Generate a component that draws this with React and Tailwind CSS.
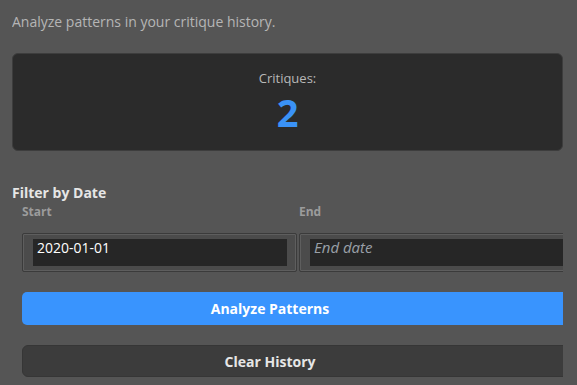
import React, { useState } from 'react';

function DateField({ label, value, placeholder }) {
  const [text, setText] = useState(value || '');
  return (
    <div className="flex flex-col">
      <span className="h-[20px] text-[12px] font-bold leading-[20px] text-[#9c9c9c]">{label}</span>
      <div className="mt-[11px] h-[39px] rounded-[2px] border border-[#3b3b3b] bg-[#4b4b4b] pl-[10px] pr-[9px] pt-[5px] shadow-[inset_0_0_0_1px_#5e5e5e]">
        <div className="h-[27px] bg-[#262626] px-[4px]">
          <input
            value={text}
            onChange={(e) => setText(e.target.value)}
            placeholder={placeholder}
            className="block h-[17px] w-full bg-transparent p-0 text-[14px] leading-[17px] text-white outline-none placeholder:text-[15px] placeholder:italic placeholder:text-[#9aa0a8]"
          />
        </div>
      </div>
    </div>
  );
}

export default function App() {
  return (
    <div className="min-h-[385px] w-[577px] overflow-hidden bg-[#555555] pl-[12px] font-['Open_Sans',sans-serif]">
      <div className="w-[551px] overflow-hidden">
        <p className="pt-[12px] text-[14px] leading-[20px] text-[#b5b5b5]">Analyze patterns in your critique history.</p>

        <div className="mt-[21px] flex h-[98px] flex-col items-center rounded-[6px] border border-[#3d3d3d] bg-[#2b2b2b] pt-[14px]">
          <span className="text-[13px] leading-[20px] text-[#b8b8b8]">Critiques:</span>
          <span className="mt-[3px] text-[38px] font-bold leading-[42px] text-[#3a92f6]">2</span>
        </div>

        <div className="mt-[33px] text-[14px] font-bold leading-[18px] text-[#e6e6e6]">Filter by Date</div>

        <div className="ml-[10px] grid w-[552px] grid-cols-2 gap-[2px]">
          <DateField label="Start" value="2020-01-01" />
          <DateField label="End" placeholder="End date" />
        </div>

        <button className="ml-[10px] mt-[20px] flex h-[33px] w-[552px] items-center justify-center rounded-[5px] bg-[#3994fe] pr-[56px] text-[14px] font-bold text-white">
          Analyze Patterns
        </button>

        <button className="ml-[10px] mt-[20px] flex h-[32px] w-[552px] items-center justify-center rounded-[6px] border border-[#363636] bg-[#3c3c3c] pr-[56px] text-[14px] font-bold text-[#e6e6e6]">
          Clear History
        </button>
      </div>
    </div>
  );
}
